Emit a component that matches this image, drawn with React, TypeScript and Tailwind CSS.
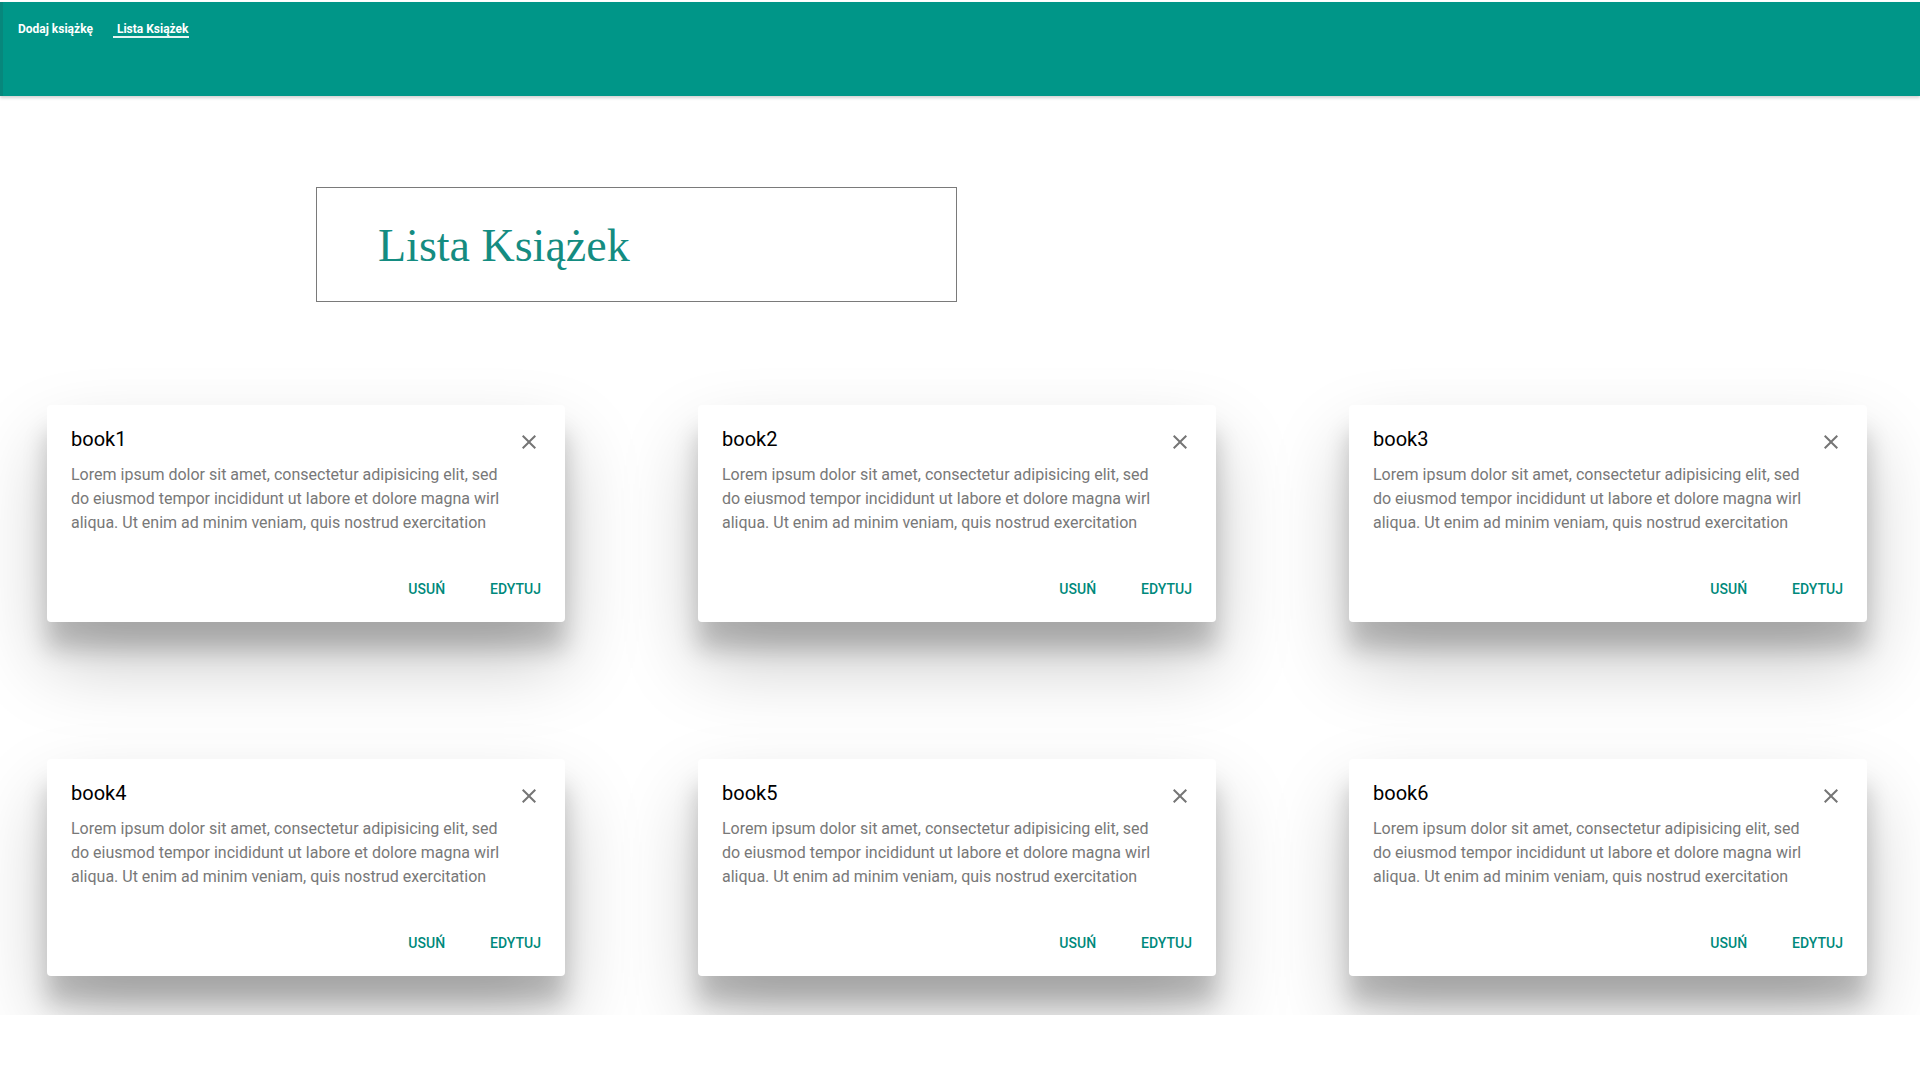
const books = ["book1", "book2", "book3", "book4", "book5", "book6"];

const CloseIcon = () => (
  <svg width="24" height="24" viewBox="0 0 24 24" className="mt-[3px] shrink-0">
    <path
      d="M19 6.41L17.59 5 12 10.59 6.41 5 5 6.41 10.59 12 5 17.59 6.41 19 12 13.41 17.59 19 19 17.59 13.41 12z"
      fill="#757575"
    />
  </svg>
);

const BookCard = ({ title }: { title: string }) => {
  return (
    <div className="h-[217px] bg-white rounded-[4px] px-[24px] pt-[22px] pb-[15px] flex flex-col shadow-[0_27px_24px_0_rgba(0,0,0,0.2),0_40px_77px_0_rgba(0,0,0,0.22)]">
      <div className="flex justify-between items-start">
        <h2 className="text-[20px] leading-[24px] text-black font-normal">{title}</h2>
        <CloseIcon />
      </div>
      <p className="mt-[9px] text-[16px] leading-[24px] text-[#787878] whitespace-nowrap">
        <span className="block">Lorem ipsum dolor sit amet, consectetur adipisicing elit, sed</span>
        <span className="block">do eiusmod tempor incididunt ut labore et dolore magna wirl</span>
        <span className="block">aliqua. Ut enim ad minim veniam, quis nostrud exercitation</span>
      </p>
      <div className="mt-auto flex justify-end items-center gap-[45px] h-[36px]">
        <button className="text-[14px] font-medium text-[#00897b] uppercase">Usuń</button>
        <button className="text-[14px] font-medium text-[#00897b] uppercase">Edytuj</button>
      </div>
    </div>
  );
};

export default function App() {
  return (
    <div className="min-h-screen bg-white pt-[2px] font-['Roboto',sans-serif]">
      <header className="h-[94px] bg-[#009688] border-l-[3px] border-l-[#07877c] shadow-[0_2px_3px_rgba(0,0,0,0.18)]">
        <nav className="flex items-start pt-[21px] pl-[15px] text-[12px] leading-[13px] font-bold text-white">
          <a href="#">Dodaj książkę</a>
          <a href="#" className="ml-[20px] pl-[4px] border-b-2 border-white/90">Lista Książek</a>
        </nav>
      </header>

      <main className="h-[919px] overflow-hidden pt-[91px]">
        <div className="ml-[316px] w-[641px] h-[115px] border border-[#7a7a7a] pt-[35px] pl-[61px]">
          <h1 className="font-['Liberation_Serif',serif] text-[46px] leading-[46px] text-[#148c81]">
            Lista Książek
          </h1>
        </div>

        <section className="mt-[103px] pl-[47px] grid grid-cols-[518px_518px_518px] gap-x-[133px] gap-y-[137px]">
          {books.map((b) => (
            <BookCard key={b} title={b} />
          ))}
        </section>
      </main>
    </div>
  );
}
